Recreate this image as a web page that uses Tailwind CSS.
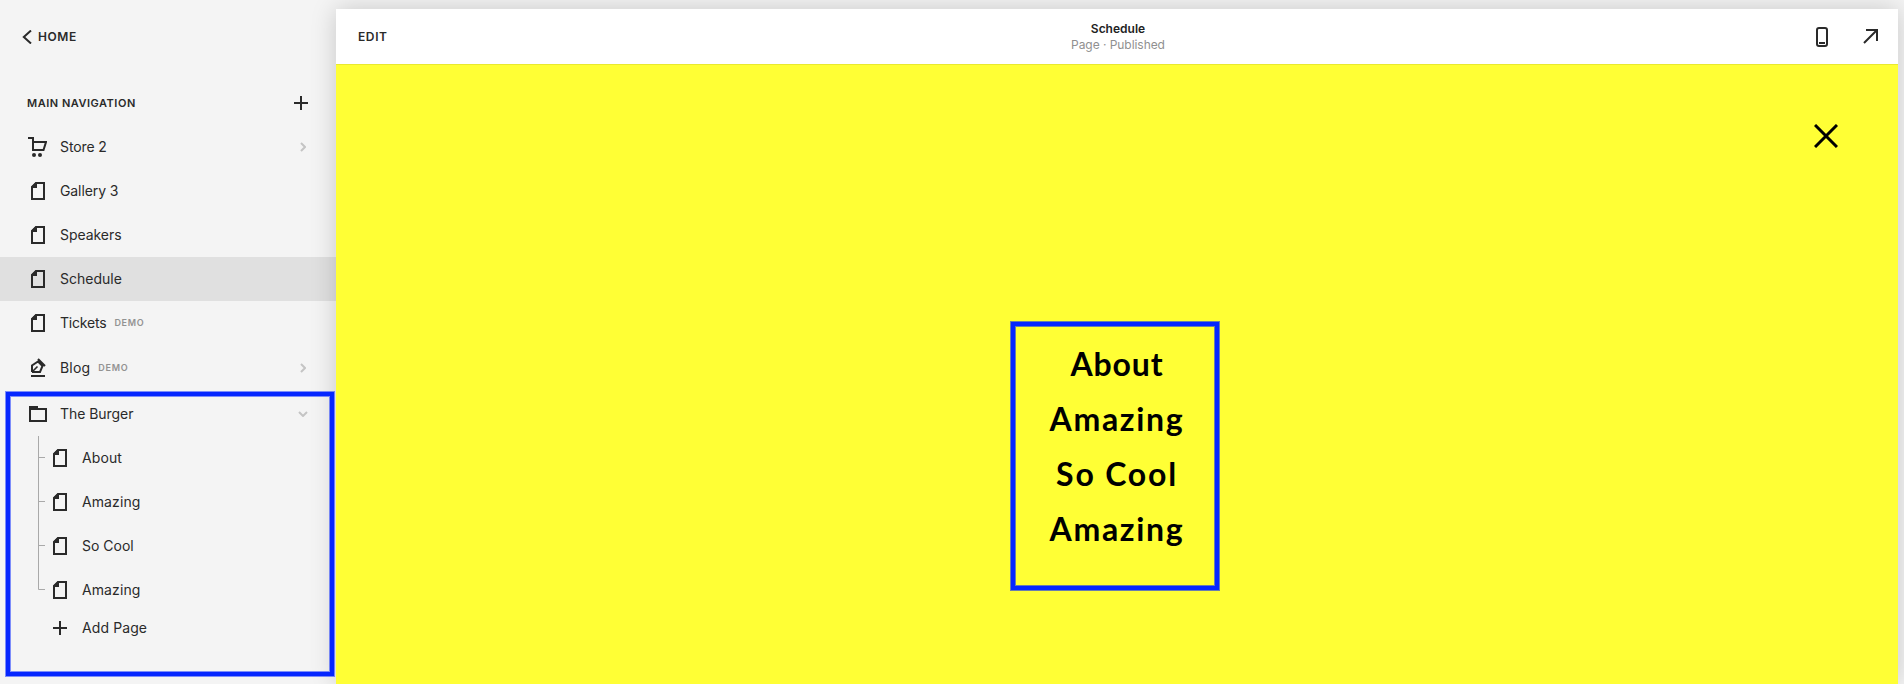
<!DOCTYPE html>
<html lang="en">
<head>
<meta charset="utf-8">
<title>Pages</title>
<script src="https://cdn.jsdelivr.net/npm/@tailwindcss/browser@4"></script>
</head>
<body class="relative flex h-[684px] w-[1904px] overflow-hidden bg-[#f4f4f4] font-['Inter',sans-serif] text-sm text-[#2a2a2a]">
<svg class="hidden">
  <symbol id="page" viewBox="0 0 14 18"><path d="M5 1H13V17H1V5Z" fill="none" stroke="currentColor" stroke-width="2"/><path d="M0 5L5 0H6V6H0Z" fill="currentColor"/></symbol>
  <symbol id="plus" viewBox="0 0 14 14"><path d="M7 0V14M0 7H14" fill="none" stroke="currentColor" stroke-width="2"/></symbol>
  <symbol id="chev" viewBox="0 0 6 10"><path d="M1 1L5 5L1 9" fill="none" stroke="currentColor" stroke-width="2"/></symbol>
</svg>
<aside class="flex w-[336px] shrink-0 flex-col">
  <div class="flex h-[73px] items-center pl-[22px] text-xs font-semibold">
    <svg class="mr-[6px] h-[14px] w-[10px]" viewBox="0 0 10 14"><path d="M9 0.5L1.8 7L9 13.5" fill="none" stroke="currentColor" stroke-width="2"/></svg>
    <span class="tracking-[0.6px]">HOME</span>
  </div>
  <div class="flex h-[52px] items-end justify-between pr-7 pl-[27px] pb-[15px] text-[11px] leading-[14px] font-semibold">
    <span class="tracking-[0.52px]">MAIN NAVIGATION</span>
    <svg class="h-[14px] w-[14px]"><use href="#plus"/></svg>
  </div>
  <nav class="flex flex-col">
    <a class="flex h-11 items-center pr-[30px] pl-7"><svg class="h-5 w-[19px]" viewBox="0 0 19 20"><path d="M0 1H5V13H15.5L18 5H5" fill="none" stroke="currentColor" stroke-width="2"/><circle cx="6" cy="18" r="2" fill="currentColor"/><circle cx="12" cy="18" r="2" fill="currentColor"/></svg><span class="ml-[13px] tracking-[-0.1px]">Store 2</span><svg class="ml-auto h-[10px] w-[6px] text-[#c4c4c4]"><use href="#chev"/></svg></a>
    <a class="flex h-11 items-center pl-[31px]"><svg class="h-[18px] w-[14px]"><use href="#page"/></svg><span class="ml-[15px] tracking-[-0.1px]">Gallery 3</span></a>
    <a class="flex h-11 items-center pl-[31px]"><svg class="h-[18px] w-[14px]"><use href="#page"/></svg><span class="ml-[15px] tracking-[-0.05px]">Speakers</span></a>
    <a class="flex h-11 items-center bg-[#e0e0e0] pl-[31px]"><svg class="h-[18px] w-[14px]"><use href="#page"/></svg><span class="ml-[15px]">Schedule</span></a>
    <a class="flex h-11 items-center pl-[31px]"><svg class="h-[18px] w-[14px]"><use href="#page"/></svg><span class="ml-[15px] tracking-[-0.2px]">Tickets</span><span class="ml-2 text-[9px] font-semibold tracking-[0.7px] text-[#929292]">DEMO</span></a>
    <a class="flex h-[46px] items-center pr-[30px] pl-[31px]"><svg class="h-5 w-[15px]" viewBox="0 0 15 20"><path d="M0 18H14M1 14V7.5L7 3.5L11.5 8L9 14H1M7 1L14 8" fill="none" stroke="currentColor" stroke-width="2"/><path d="M1 14L6.5 8.5" stroke="currentColor" stroke-width="1.6"/></svg><span class="ml-[14px] tracking-[0.2px]">Blog</span><span class="ml-2 text-[9px] font-semibold tracking-[0.7px] text-[#929292]">DEMO</span><svg class="ml-auto h-[10px] w-[6px] text-[#c4c4c4]"><use href="#chev"/></svg></a>
    <a class="flex h-[45px] items-center pr-7 pl-[29px]"><svg class="h-4 w-[18px]" viewBox="0 0 18 16"><path d="M1 3H17V15H1Z" fill="none" stroke="currentColor" stroke-width="2"/><path d="M0 0H9V3H0Z" fill="currentColor"/></svg><span class="ml-[13px] tracking-[-0.05px]">The Burger</span><svg class="ml-auto h-[6px] w-[10px] text-[#c4c4c4]" viewBox="0 0 10 6"><path d="M1 1L5 5L9 1" fill="none" stroke="currentColor" stroke-width="2"/></svg></a>
    <div class="flex pl-[38px]">
      <svg class="h-[154px] w-[7px] text-[#a9a9a9]" viewBox="0 0 7 154"><path d="M.5 0V153.5H7M.5 21.5H7M.5 65.5H7M.5 109.5H7" fill="none" stroke="currentColor"/></svg>
      <div class="flex flex-col pl-2">
        <a class="flex h-11 items-center"><svg class="h-[18px] w-[14px]"><use href="#page"/></svg><span class="ml-[15px] tracking-[0.1px]">About</span></a>
        <a class="flex h-11 items-center"><svg class="h-[18px] w-[14px]"><use href="#page"/></svg><span class="ml-[15px] tracking-[0.1px]">Amazing</span></a>
        <a class="flex h-11 items-center"><svg class="h-[18px] w-[14px]"><use href="#page"/></svg><span class="ml-[15px]">So Cool</span></a>
        <a class="flex h-11 items-center"><svg class="h-[18px] w-[14px]"><use href="#page"/></svg><span class="ml-[15px] tracking-[0.1px]">Amazing</span></a>
        <a class="flex h-8 items-center"><svg class="h-[14px] w-[14px]"><use href="#plus"/></svg><span class="ml-[15px] tracking-[0.1px]">Add Page</span></a>
      </div>
    </div>
  </nav>
</aside>
<main class="mt-[9px] flex w-[1562px] flex-col bg-[#ffff35] shadow-[0_0_24px_rgba(0,0,0,0.18)]">
  <header class="grid h-14 grid-cols-3 items-center border-b border-[#e9e92f] bg-white pr-5 pl-[22px] text-xs">
    <span class="font-semibold tracking-[0.6px]">EDIT</span>
    <div class="text-center leading-4"><div class="font-semibold text-[#222]">Schedule</div><div class="tracking-[-0.05px] text-[#909090]">Page · Published</div></div>
    <div class="flex items-center justify-end gap-[35px]">
      <svg class="h-5 w-3" viewBox="0 0 12 20"><rect x="1" y="1" width="10" height="18" rx="2" fill="none" stroke="currentColor" stroke-width="2"/><path d="M3 16H9" stroke="currentColor" stroke-width="2"/></svg>
      <svg class="h-[15px] w-[15px]" viewBox="0 0 15 15"><path d="M3 1H14V12M14 1L1 14" fill="none" stroke="currentColor" stroke-width="2"/></svg>
    </div>
  </header>
  <div class="flex h-[83px] items-end justify-end pr-[60px]"><svg class="h-6 w-6 text-black" viewBox="0 0 24 24"><path d="M1 1L23 23M23 1L1 23" fill="none" stroke="currentColor" stroke-width="3"/></svg></div>
  <div class="mt-[174px] ml-[675px] flex h-[268px] w-[208px] flex-col items-center border-4 border-[#0526ff] pt-[10px] pl-1 font-['Lato',sans-serif] text-[32px] leading-[55px] font-bold text-black shadow-[0_0_0_1px_#0526ff99,inset_0_0_0_1px_#0526ff99]">
    <a class="tracking-[0.9px]">About</a><a class="tracking-[1.7px]">Amazing</a><a class="tracking-[1.8px]">So Cool</a><a class="tracking-[1.7px]">Amazing</a>
  </div>
</main>
<div class="absolute top-[392px] left-[6px] h-[284px] w-[328px] border-4 border-[#0526ff] shadow-[0_0_0_1px_#0526ff80,inset_0_0_0_1px_#0526ff80]"></div>
</body>
</html>
